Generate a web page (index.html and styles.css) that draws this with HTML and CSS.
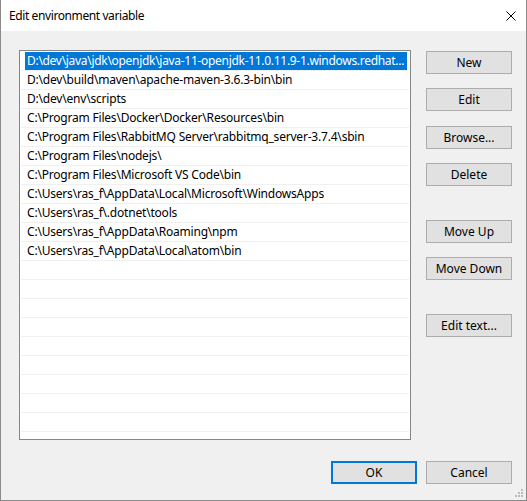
FILE: index.html
```html
<!DOCTYPE html>
<html lang="en">
<head>
<meta charset="utf-8">
<title>Edit environment variable</title>
<link rel="stylesheet" href="styles.css">
</head>
<body>
<div class="window">
  <div class="titlebar">
    <span class="title">Edit environment variable</span>
    <svg class="close" width="10" height="10" viewBox="0 0 10 10" aria-hidden="true">
      <path d="M0.5 0.5 L9.5 9.5 M9.5 0.5 L0.5 9.5" stroke="#000" stroke-width="1" fill="none"/>
    </svg>
  </div>
  <div class="content">
    <div class="main">
      <div class="list">
        <div class="row selected"><span class="label">D:\dev\java\jdk\openjdk\java-11-openjdk-11.0.11.9-1.windows.redhat...</span></div>
        <div class="row"><span class="label">D:\dev\build\maven\apache-maven-3.6.3-bin\bin</span></div>
        <div class="row"><span class="label">D:\dev\env\scripts</span></div>
        <div class="row"><span class="label">C:\Program Files\Docker\Docker\Resources\bin</span></div>
        <div class="row"><span class="label">C:\Program Files\RabbitMQ Server\rabbitmq_server-3.7.4\sbin</span></div>
        <div class="row"><span class="label">C:\Program Files\nodejs\</span></div>
        <div class="row"><span class="label">C:\Program Files\Microsoft VS Code\bin</span></div>
        <div class="row"><span class="label">C:\Users\ras_f\AppData\Local\Microsoft\WindowsApps</span></div>
        <div class="row"><span class="label">C:\Users\ras_f\.dotnet\tools</span></div>
        <div class="row"><span class="label">C:\Users\ras_f\AppData\Roaming\npm</span></div>
        <div class="row"><span class="label">C:\Users\ras_f\AppData\Local\atom\bin</span></div>
        <div class="row"><span class="label"></span></div>
        <div class="row"><span class="label"></span></div>
        <div class="row"><span class="label"></span></div>
        <div class="row"><span class="label"></span></div>
        <div class="row"><span class="label"></span></div>
        <div class="row"><span class="label"></span></div>
        <div class="row"><span class="label"></span></div>
        <div class="row"><span class="label"></span></div>
        <div class="row"><span class="label"></span></div>
        <div class="row"><span class="label"></span></div>
      </div>
      <div class="actions">
        <button class="btn">New</button>
        <button class="btn">Edit</button>
        <button class="btn shift">Browse...</button>
        <button class="btn">Delete</button>
        <button class="btn spaced">Move Up</button>
        <button class="btn">Move Down</button>
        <button class="btn spaced">Edit text...</button>
      </div>
    </div>
    <div class="footer">
      <button class="btn default">OK</button>
      <button class="btn">Cancel</button>
    </div>
  </div>
  <svg class="grip" width="9" height="9" viewBox="0 0 9 9" aria-hidden="true">
    <rect x="6" y="0" width="2" height="2" fill="#bdbdbd"/>
    <rect x="3" y="3" width="2" height="2" fill="#bdbdbd"/>
    <rect x="6" y="3" width="2" height="2" fill="#bdbdbd"/>
    <rect x="0" y="6" width="2" height="2" fill="#bdbdbd"/>
    <rect x="3" y="6" width="2" height="2" fill="#bdbdbd"/>
    <rect x="6" y="6" width="2" height="2" fill="#bdbdbd"/>
  </svg>
</div>
</body>
</html>
```

FILE: styles.css
```css
* {
  box-sizing: border-box;
}

html, body {
  margin: 0;
  padding: 0;
  background: #f0f0f0;
}

body {
  font-family: "Noto Sans", "Open Sans", sans-serif;
  font-size: 12px;
  color: #000;
}

.window {
  position: relative;
  width: 527px;
  height: 501px;
  background: #f0f0f0;
  border: 1px solid #8a8a8a;
  border-top: none;
  display: flex;
  flex-direction: column;
}

.titlebar {
  height: 31px;
  background: #fff;
  display: flex;
  align-items: center;
  padding-left: 8px;
  padding-right: 10px;
}

.title {
  flex: 1;
  line-height: 31px;
  white-space: nowrap;
  letter-spacing: -0.4px;
}

.close {
  display: block;
  margin-top: 1px;
}

.content {
  padding: 19px 14px 16px 18px;
  display: flex;
  flex-direction: column;
}

.main {
  display: flex;
  gap: 15px;
}

.list {
  width: 392px;
  height: 390px;
  background: #fff;
  border: 1px solid #868686;
  padding: 1px 1px 0 1px;
  overflow: hidden;
}

.row {
  height: 19px;
  border-bottom: 1px solid #f0f0f0;
  padding: 0 2px 0 4px;
}

.label {
  display: block;
  height: 18px;
  line-height: 18px;
  padding-left: 2px;
  white-space: nowrap;
  overflow: hidden;
  letter-spacing: -0.2px;
}

.row.selected .label {
  background: #0078d7;
  color: #fff;
  letter-spacing: -0.3px;
}

.actions {
  display: flex;
  flex-direction: column;
  gap: 14px;
  padding-top: 1px;
}

.btn {
  width: 86px;
  height: 23px;
  margin: 0;
  padding: 0;
  background: #e1e1e1;
  border: 1px solid #adadad;
  font-family: inherit;
  font-size: 12px;
  color: #000;
  text-align: center;
  line-height: 21px;
}

.btn.shift {
  margin-top: 1px;
}

.btn.spaced {
  margin-top: 20px;
}

.btn.default {
  border: 2px solid #0078d7;
  line-height: 19px;
}

.footer {
  margin-top: 21px;
  display: flex;
  justify-content: flex-end;
  gap: 9px;
}

.grip {
  position: absolute;
  right: 2px;
  bottom: 2px;
}
```
